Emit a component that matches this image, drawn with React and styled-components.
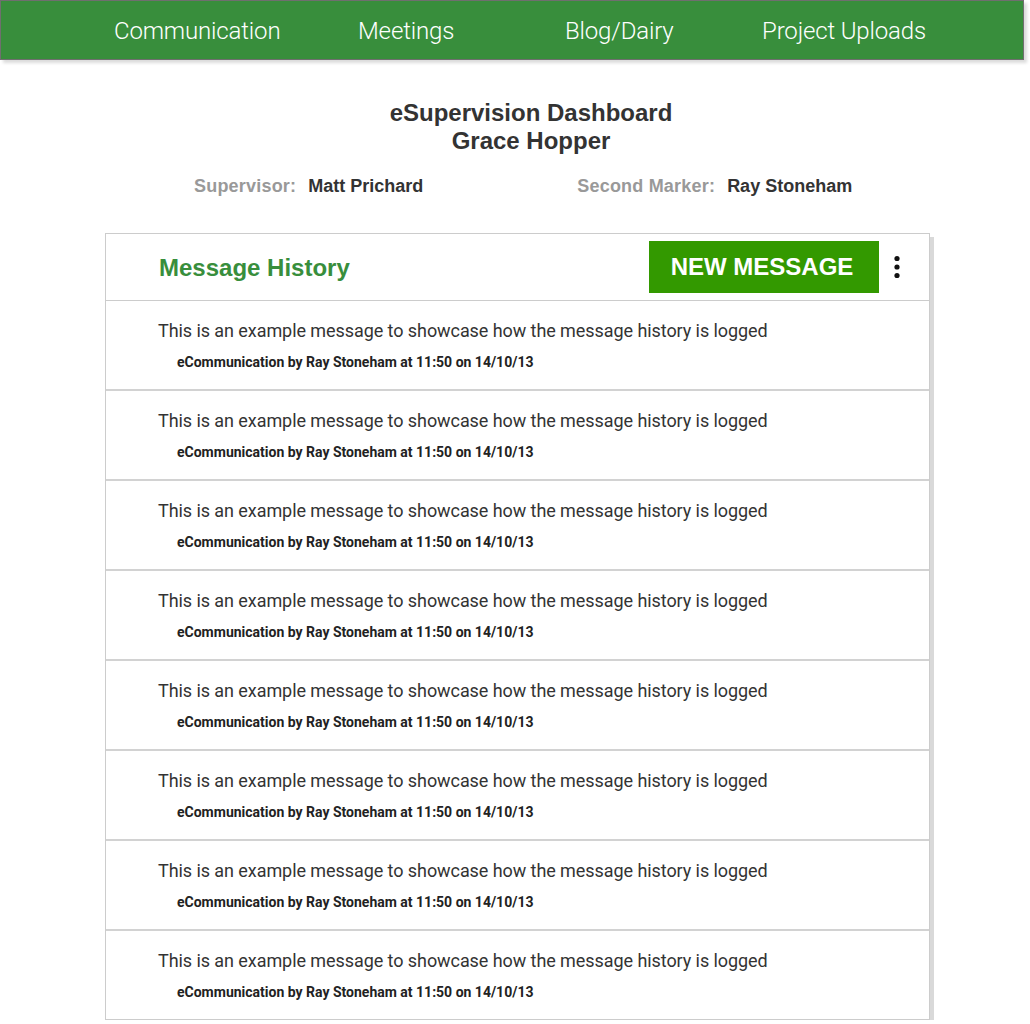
import React from "react";
import styled, { createGlobalStyle } from "styled-components";

const GlobalStyle = createGlobalStyle`
	body {
		margin: 0;
		background: #fff;
		font-family: Roboto, "Liberation Sans", sans-serif;
	}
`;

const NavBar = styled.nav`
	box-sizing: border-box;
	width: 1024px;
	height: 60px;
	background: #388e3c;
	border: 1px solid #6f6f6f;
	box-shadow: 3px 3px 3px rgba(0, 0, 0, 0.14);
	display: grid;
	grid-template-columns: 244px 207px 197px auto;
	align-items: center;
	padding-left: 113px;
	padding-top: 2px;
`;

const NavItem = styled.a`
	color: #fff;
	font-family: Roboto, sans-serif;
	font-weight: 300;
	font-size: 24px;
	letter-spacing: -0.15px;
	text-decoration: none;
	white-space: nowrap;
`;

const Heading = styled.header`
	margin-top: 39px;
	text-align: center;
	font-family: "Liberation Sans", Arial, sans-serif;
	font-weight: bold;
	font-size: 24px;
	line-height: 28px;
	color: #333;
	width: 1030px;
	padding-left: 32px;
	box-sizing: border-box;
`;

const People = styled.div`
	display: flex;
	margin-top: 21px;
	padding-left: 194px;
	gap: 154px;
	font-family: "Liberation Sans", Arial, sans-serif;
	font-weight: bold;
	font-size: 18px;
	line-height: 21px;
`;

const Person = styled.div`
	display: flex;
	gap: 12px;
`;

const Role = styled.span`
	color: #999;
	letter-spacing: 0.2px;
`;

const Name = styled.span`
	color: #333;
`;

const Card = styled.section`
	box-sizing: border-box;
	width: 825px;
	margin: 36px 0 0 105px;
	border: 1px solid #ccc;
	box-shadow: 4px 4px 0 #d9d9d9;
	background: #fff;
`;

const CardHeader = styled.div`
	height: 66px;
	display: flex;
	align-items: center;
	padding-left: 53px;
	border-bottom: 1px solid #ccc;
`;

const CardTitle = styled.h2`
	flex: 1;
	margin: 0;
	padding-top: 2px;
	color: #388e3c;
	font-family: "Liberation Sans", Arial, sans-serif;
	font-weight: 700;
	font-size: 24px;
`;

const NewButton = styled.button`
	width: 230px;
	height: 52px;
	padding: 0 4px 0 0;
	border: none;
	background: #339900;
	color: #fff;
	font-family: "Liberation Sans", Arial, sans-serif;
	font-weight: 700;
	font-size: 24px;
	text-transform: uppercase;
	cursor: pointer;
`;

const MenuButton = styled.button`
	width: 36px;
	height: 40px;
	margin-right: 14px;
	padding: 0;
	border: none;
	background: none;
	display: flex;
	align-items: center;
	justify-content: center;
`;

const Row = styled.div`
	height: 88px;
	box-sizing: content-box;
	padding-left: 52px;
	border-bottom: 2px solid #d2d2d2;

	&:last-child {
		border-bottom: none;
	}
`;

const MessageText = styled.p`
	margin: 0;
	padding-top: 18px;
	font-size: 18px;
	line-height: 24px;
	letter-spacing: -0.07px;
	color: #333;
`;

const Meta = styled.p`
	margin: 10px 0 0 19px;
	font-size: 14px;
	line-height: 18px;
	font-weight: 700;
	color: #222;
`;

const navItems = ["Communication", "Meetings", "Blog/Dairy", "Project Uploads"];

const messages = Array.from({ length: 8 }, () => ({
	text: "This is an example message to showcase how the message history is logged",
	meta: "eCommunication by Ray Stoneham at 11:50 on 14/10/13",
}));

const Dots = () => (
	<svg width="6" height="24" viewBox="0 0 6 24">
		<circle cx="3" cy="3.5" r="2.6" fill="#111" />
		<circle cx="3" cy="12" r="2.6" fill="#111" />
		<circle cx="3" cy="20.5" r="2.6" fill="#111" />
	</svg>
);

export default function App() {
	return (
		<>
			<GlobalStyle />
			<NavBar>
				{navItems.map((item) => (
					<NavItem key={item} href="#">
						{item}
					</NavItem>
				))}
			</NavBar>
			<Heading>
				eSupervision Dashboard
				<br />
				Grace Hopper
			</Heading>
			<People>
				<Person>
					<Role>Supervisor:</Role>
					<Name>Matt Prichard</Name>
				</Person>
				<Person>
					<Role>Second Marker:</Role>
					<Name>Ray Stoneham</Name>
				</Person>
			</People>
			<Card>
				<CardHeader>
					<CardTitle>Message History</CardTitle>
					<NewButton>New Message</NewButton>
					<MenuButton aria-label="more">
						<Dots />
					</MenuButton>
				</CardHeader>
				{messages.map((m, i) => (
					<Row key={i}>
						<MessageText>{m.text}</MessageText>
						<Meta>{m.meta}</Meta>
					</Row>
				))}
			</Card>
		</>
	);
}
